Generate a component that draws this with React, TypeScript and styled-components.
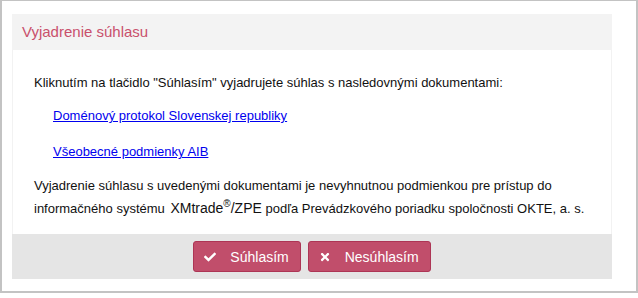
import React from "react";
import styled, { createGlobalStyle } from "styled-components";
import { FaCheck, FaTimes } from "react-icons/fa";

const GlobalStyle = createGlobalStyle`
  html, body {
    margin: 0;
    padding: 0;
    background: #ffffff;
    font-family: Arial, "Liberation Sans", sans-serif;
  }
`;

const App = () => {
  return (
    <>
      <GlobalStyle />
      <Frame>
        <Panel>
          <PanelHeader>Vyjadrenie súhlasu</PanelHeader>
          <PanelBody>
            <Text>
              Kliknutím na tlačidlo "Súhlasím" vyjadrujete súhlas s nasledovnými dokumentami:
            </Text>
            <DocList>
              <DocItem>
                <DocLink href="#">Doménový protokol Slovenskej republiky</DocLink>
              </DocItem>
              <DocItem>
                <DocLink href="#">Všeobecné podmienky AIB</DocLink>
              </DocItem>
            </DocList>
            <Text>
              Vyjadrenie súhlasu s uvedenými dokumentami je nevyhnutnou podmienkou pre prístup do
              informačného systému <Brand>XMtrade<Sup>®</Sup>/ZPE</Brand> podľa Prevádzkového poriadku
              spoločnosti OKTE, a. s.
            </Text>
          </PanelBody>
          <PanelFooter>
            <Button type="button">
              <FaCheck />
              <span>Súhlasím</span>
            </Button>
            <Button type="button">
              <FaTimes />
              <span>Nesúhlasím</span>
            </Button>
          </PanelFooter>
        </Panel>
      </Frame>
    </>
  );
};

export default App;

const Frame = styled.div`
  box-sizing: border-box;
  width: 638px;
  height: 293px;
  border: 2px solid #c3c3c3;
  border-top-width: 1px;
  padding: 13px 24px 0 10px;
`;

const Panel = styled.section`
  width: 600px;
  display: flex;
  flex-direction: column;
`;

const PanelHeader = styled.h3`
  margin: 0;
  height: 36px;
  line-height: 36px;
  padding: 0 10px;
  background: #f3f3f3;
  color: #c9506c;
  font-size: 15px;
  font-weight: normal;
`;

const PanelBody = styled.div`
  background: #ffffff;
  border: 1px solid #f2f2f2;
  border-top: none;
  border-bottom: none;
  padding: 21px 21px 14px;
  color: #111111;
  font-size: 13px;
`;

const Text = styled.p`
  margin: 0;
  line-height: 23px;
`;

const DocList = styled.ul`
  list-style: none;
  margin: 11px 0 12px;
  padding: 0 0 0 19px;
  display: flex;
  flex-direction: column;
  gap: 15px;
`;

const DocItem = styled.li`
  line-height: 21px;
`;

const DocLink = styled.a`
  color: #0000ee;
  text-decoration: underline;
`;

const Brand = styled.span`
  font-size: 14px;
  margin-left: 2px;
`;

const Sup = styled.span`
  display: inline-block;
  font-size: 10px;
  line-height: 10px;
  vertical-align: 6px;
`;

const PanelFooter = styled.div`
  height: 45px;
  box-sizing: border-box;
  background: #e5e5e5;
  padding-top: 7px;
  display: flex;
  justify-content: center;
  align-items: flex-start;
  gap: 7px;
`;

const Button = styled.button`
  box-sizing: border-box;
  height: 31px;
  display: inline-flex;
  align-items: center;
  gap: 14px;
  padding: 0 11px 0 10px;
  background: #c14e6b;
  border: 1px solid #ad3555;
  border-radius: 3px;
  color: #ffffff;
  font-family: Arial, "Liberation Sans", sans-serif;
  font-size: 14px;
  cursor: pointer;

  svg {
    width: 12px;
    height: 12px;
  }
`;
